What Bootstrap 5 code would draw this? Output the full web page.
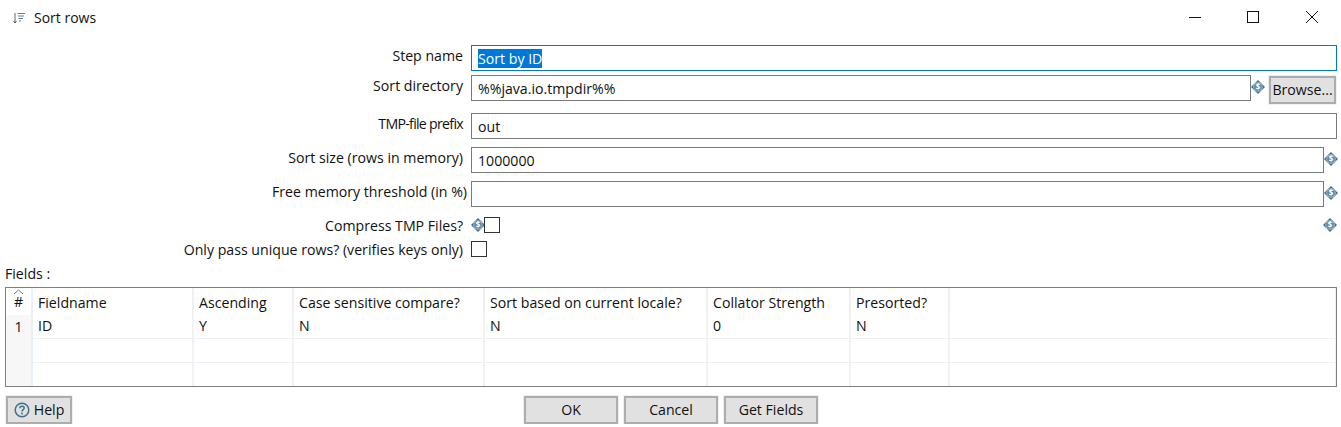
<!DOCTYPE html>
<html lang="en">
<head>
    <meta charset="UTF-8">
    <meta name="viewport" content="width=device-width, initial-scale=1.0">
    <title>Sort rows</title>
    <link rel="stylesheet" href="https://cdn.jsdelivr.net/npm/bootstrap@5.3.0/dist/css/bootstrap.min.css">
    <style>
        body { background: #fff; color: #111; font-family: "Open Sans", "Noto Sans", sans-serif; font-size: 14.15px; overflow: hidden; }
        .title-bar { height: 36px; padding-left: 12px; }
        .title-text { font-size: 14px; margin-left: 8px; margin-top: -1px; }
        .win-controls { margin-bottom: 5px; }
        .win-btn { width: 58px; height: 31px; background: none; border: 0; padding: 0; }
        .win-min { width: 56px; }
        .win-max { width: 60px; }
        .dlg-form { margin-top: 9px; padding-right: 4px; }
        .dlg-row { min-height: 26px; }
        .dlg-label { width: 463px; padding-bottom: 4px; text-align: right; flex: none; line-height: 22px; }
        .dlg-label.is-wide { width: 467px; }
        .dlg-label.is-wide + .dlg-input { margin-left: 4px; }
        .dlg-label.is-tight { letter-spacing: -.7px; }
        .dlg-input { margin-left: 8px; height: 26px; border: 1px solid #7a7a7a; border-radius: 0; padding: 3px 6px 0; line-height: 20px; color: #111; }
        .dlg-input.is-focus { border-color: #0078d7; }
        .sel-text { background: #0078d7; color: #fff; }
        .var-icon { width: 14px; height: 14px; flex: none; display: block; }
        .var-icon.is-snug { margin-right: -1px; }
        .var-icon text { font: 700 8px "Open Sans", sans-serif; fill: #fff; text-anchor: middle; }
        .icon-gap { width: 13px; flex: none; padding-top: 5px; }
        .dlg-btn { background: #e1e1e1; border: 2px solid #adadad; border-radius: 0; color: #111; font-size: 14.15px; height: 28px; padding: 0; line-height: 24px; outline: 1px solid #f0f0f0; }
        .dlg-btn:hover { background: #e1e1e1; border-color: #adadad; color: #111; }
        .btn-browse { width: 67px; margin: 1px 1px 0 5px; }
        .mb-4px { margin-bottom: 4px; }
        .mb-8px { margin-bottom: 8px; }
        .mb-9px { margin-bottom: 9px; }
        .mt-8px { margin-top: 8px; }
        .mt-10px { margin-top: 10px; }
        .chk-box { width: 16px; height: 16px; border: 1px solid #333; flex: none; background: #fff; }
        .chk-row { height: 16px; }
        .chk-row .dlg-label { padding: 2px 0 0; line-height: 18px; }
        .fields-label { margin: 8px 0 0 5px; line-height: 18px; }
        .grid-wrap { margin: 4px 4px 0 5px; height: 100px; border: 1.5px solid #7f7f7f; overflow: hidden; }
        .grid-table { table-layout: fixed; width: 1331px; margin: 0; font-size: 14.15px; --bs-table-color: #111; }
        .grid-table th, .grid-table td { font-weight: 400; padding: 0 0 0 5px; height: 24px; line-height: 20px; border-bottom: 1.5px solid #eef0f3; border-right: 2px solid #eff3f8; white-space: nowrap; overflow: hidden; vertical-align: middle; }
        .grid-table thead th { height: 27px; border-bottom: 0; border-right: 2px solid #f0f0f0; padding-top: 2px; }
        .grid-table tbody tr:first-child td { height: 23px; }
        .grid-table .row-head { background: #f7f7f7; text-align: center; padding: 0; border-bottom: 0; border-right: 2px solid #eaf0f8; }
        .grid-table thead th.row-head { background: #fff; position: relative; }
        .sort-caret { position: absolute; left: 7px; top: 1px; display: block; }
        .dlg-footer { position: relative; margin: 9px 4px 0 6px; }
        .btn-help { width: 66px; display: flex; align-items: center; justify-content: center; gap: 4px; }
        .btn-main { width: 94px; }
        .main-btns { position: absolute; left: 518px; top: 0; gap: 6px; }
    </style>
</head>
<body>

    <svg width="0" height="0" class="position-absolute">
        <symbol id="var-sym" viewBox="0 0 14 14">
            <path d="M7 0 14 7 7 14 0 7Z" fill="#3f6f92"/>
            <circle cx="7" cy="7" r="4.300" fill="#5f8aa8" stroke="#b4c8d6" stroke-width=".8"/>
        </symbol>
    </svg>

    <!-- Title bar -->
    <div class="title-bar d-flex align-items-center">
        <svg width="14" height="14" viewBox="0 0 14 14" fill="none" stroke="#5c7f9c" stroke-width="1">
            <path d="M3 2V11" stroke="#667"/>
            <path d="M1.500 10 3 12 4.500 10" stroke="#456"/>
            <path d="M5.500 2.500H13M6 5H12M6.500 7.500H11M7 10H9"/>
        </svg>
        <span class="title-text">Sort rows</span>
        <div class="win-controls d-flex ms-auto">
            <button class="win-btn win-min" type="button" aria-label="Minimize">
                <svg width="12" height="12" viewBox="0 0 12 12"><path d="M0 6.500H12" stroke="#111"/></svg>
            </button>
            <button class="win-btn win-max" type="button" aria-label="Maximize">
                <svg width="12" height="12" viewBox="0 0 12 12"><rect x=".5" y=".5" width="11" height="11" fill="none" stroke="#111"/></svg>
            </button>
            <button class="win-btn" type="button" aria-label="Close">
                <svg width="12" height="12" viewBox="0 0 12 12"><path d="M0 0 12 12M12 0 0 12" stroke="#111"/></svg>
            </button>
        </div>
    </div>

    <!-- Form -->
    <div class="dlg-form">
        <div class="dlg-row d-flex mb-4px">
            <label class="dlg-label">Step name</label>
            <div class="dlg-input is-focus flex-grow-1"><span class="sel-text">Sort by ID</span></div>
        </div>
        <div class="dlg-row d-flex mb-9px">
            <label class="dlg-label">Sort directory</label>
            <div class="dlg-input flex-grow-1">%%java.io.tmpdir%%</div>
            <div class="icon-gap">
                <svg class="var-icon" viewBox="0 0 14 14"><use href="#var-sym"/><text x="7" y="9.800">$</text></svg>
            </div>
            <button class="btn dlg-btn btn-browse" type="button">Browse...</button>
        </div>
        <div class="dlg-row d-flex mb-8px">
            <label class="dlg-label is-tight">TMP-file prefix</label>
            <div class="dlg-input flex-grow-1">out</div>
        </div>
        <div class="dlg-row d-flex mb-8px">
            <label class="dlg-label">Sort size (rows in memory)</label>
            <div class="dlg-input flex-grow-1">1000000</div>
            <div class="icon-gap">
                <svg class="var-icon" viewBox="0 0 14 14"><use href="#var-sym"/><text x="7" y="9.800">$</text></svg>
            </div>
        </div>
        <div class="dlg-row d-flex">
            <label class="dlg-label is-wide">Free memory threshold (in %)</label>
            <div class="dlg-input flex-grow-1"></div>
            <div class="icon-gap">
                <svg class="var-icon" viewBox="0 0 14 14"><use href="#var-sym"/><text x="7" y="9.800">$</text></svg>
            </div>
        </div>
        <div class="chk-row d-flex align-items-center mt-10px">
            <label class="dlg-label">Compress TMP Files?</label>
            <svg class="var-icon is-snug ms-2" viewBox="0 0 14 14"><use href="#var-sym"/><text x="7" y="9.800">$</text></svg>
            <div class="chk-box"></div>
            <svg class="var-icon ms-auto" viewBox="0 0 14 14"><use href="#var-sym"/><text x="7" y="9.800">$</text></svg>
        </div>
        <div class="chk-row d-flex align-items-center mt-8px">
            <label class="dlg-label">Only pass unique rows? (verifies keys only)</label>
            <div class="chk-box ms-2"></div>
        </div>
    </div>

    <!-- Fields table -->
    <div class="fields-label">Fields :</div>
    <div class="grid-wrap">
        <table class="table grid-table">
            <colgroup>
                <col style="width:26px"><col style="width:161px"><col style="width:100px"><col style="width:191px">
                <col style="width:223px"><col style="width:143px"><col style="width:99px"><col>
            </colgroup>
            <thead>
                <tr>
                    <th class="row-head">
                        <svg class="sort-caret" width="11" height="6" viewBox="0 0 11 6" fill="none" stroke="#777"><path d="M1 5 5.500 1 10 5"/></svg>
                        #
                    </th>
                    <th>Fieldname</th>
                    <th>Ascending</th>
                    <th>Case sensitive compare?</th>
                    <th>Sort based on current locale?</th>
                    <th>Collator Strength</th>
                    <th>Presorted?</th>
                    <th></th>
                </tr>
            </thead>
            <tbody>
                <tr>
                    <td class="row-head">1</td>
                    <td>ID</td><td>Y</td><td>N</td><td>N</td><td>0</td><td>N</td><td></td>
                </tr>
                <tr>
                    <td class="row-head"></td>
                    <td></td><td></td><td></td><td></td><td></td><td></td><td></td>
                </tr>
                <tr>
                    <td class="row-head"></td>
                    <td></td><td></td><td></td><td></td><td></td><td></td><td></td>
                </tr>
            </tbody>
        </table>
    </div>

    <!-- Buttons -->
    <div class="dlg-footer">
        <button class="btn dlg-btn btn-help" type="button">
            <svg width="16" height="16" viewBox="0 0 16 16" fill="none">
                <circle cx="8" cy="8" r="6.800" stroke="#41708f" stroke-width="1.500"/>
                <path d="M5.800 6.300C5.900 4.800 7 4.200 8 4.200 9.300 4.200 10.200 5 10.200 6.100 10.200 7.600 8 7.700 8 9.400" stroke="#41708f" stroke-width="1.500"/>
                <circle cx="8" cy="11.500" r="1" fill="#41708f"/>
            </svg>
            Help
        </button>
        <div class="main-btns d-flex">
            <button class="btn dlg-btn btn-main" type="button">OK</button>
            <button class="btn dlg-btn btn-main" type="button">Cancel</button>
            <button class="btn dlg-btn btn-main" type="button">Get Fields</button>
        </div>
    </div>

    <script src="https://cdn.jsdelivr.net/npm/bootstrap@5.3.0/dist/js/bootstrap.bundle.min.js"></script>
</body>
</html>
